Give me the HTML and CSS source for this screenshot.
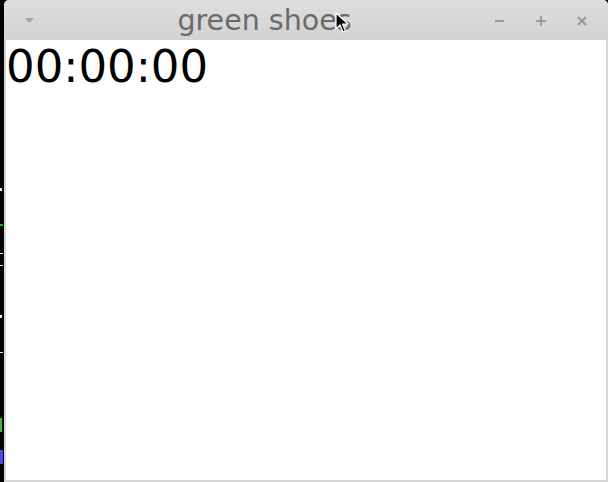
FILE: index.html
```html
<!DOCTYPE html>
<html>
<head>
<meta charset="utf-8">
<link rel="stylesheet" href="styles.css">
</head>
<body>
<div class="desktop">
  <div class="strip">
    <span class="mark m1"></span>
    <span class="mark m2"></span>
    <span class="mark m3"></span>
    <span class="mark m4"></span>
    <span class="mark m5"></span>
    <span class="mark m6"></span>
    <span class="mark m7"></span>
    <span class="mark m8"></span>
  </div>
  <div class="window">
    <div class="titlebar">
      <div class="menu-btn">
        <svg width="9" height="6" viewBox="0 0 9 6"><path d="M0 0 H9 L4.5 5 Z" fill="#a6a6a6"/></svg>
      </div>
      <div class="title">green shoes</div>
      <div class="controls">
        <svg class="ctl" width="12" height="12" viewBox="0 0 12 12"><rect x="1" y="5" width="9" height="2" fill="#9a9a9a"/></svg>
        <svg class="ctl" width="12" height="12" viewBox="0 0 12 12"><rect x="1" y="5" width="10" height="2" fill="#9a9a9a"/><rect x="5" y="1" width="2" height="10" fill="#9a9a9a"/></svg>
        <svg class="ctl" width="12" height="12" viewBox="0 0 12 12"><path d="M2 2 L10 10 M10 2 L2 10" stroke="#9a9a9a" stroke-width="2.2"/></svg>
      </div>
    </div>
    <div class="content">
      <div class="clock">00:00:00</div>
    </div>
  </div>
  <svg class="cursor" width="14" height="22" viewBox="0 0 14 22">
    <path d="M1 1 L1 17 L5 13 L8 20 L10.5 19 L7.5 12 L13 12 Z" fill="#000" stroke="#fff" stroke-width="1.2" stroke-linejoin="round"/>
  </svg>
</div>
</body>
</html>
```

FILE: styles.css
```css
html, body {
  margin: 0;
  padding: 0;
  background: #000;
}
.desktop {
  position: relative;
  width: 608px;
  height: 482px;
  display: flex;
  overflow: hidden;
  background: #000;
}
.strip {
  position: relative;
  width: 4px;
  flex: none;
  background: #000;
}
.mark {
  position: absolute;
  left: 0;
  width: 3px;
  height: 2px;
  background: #e8e8e8;
}
.m1 { top: 188px; height: 3px; width: 2px; }
.m2 { top: 224px; background: #1fae1f; height: 2px; }
.m3 { top: 253px; height: 1px; }
.m4 { top: 265px; height: 1px; }
.m5 { top: 315px; height: 3px; width: 2px; }
.m6 { top: 352px; height: 1px; }
.m7 { top: 418px; background: #35c035; height: 14px; width: 2px; }
.m8 { top: 450px; background: #4a4af0; height: 14px; width: 3px; }
.window {
  flex: 1;
  display: flex;
  flex-direction: column;
  border-radius: 5px 5px 0 0;
  overflow: hidden;
  background: #d6d6d6;
}
.titlebar {
  height: 40px;
  flex: none;
  display: flex;
  align-items: center;
  background: linear-gradient(#dedede, #d2d2d2);
}
.menu-btn {
  width: 50px;
  display: flex;
  justify-content: center;
  padding-top: 1px;
}
.title {
  flex: 1;
  text-align: center;
  font-family: "DejaVu Sans", sans-serif;
  font-size: 28.5px;
  color: #6a6a6a;
  padding-right: 19px;
}
.controls {
  display: flex;
  gap: 29px;
  padding-right: 20px;
  padding-top: 1px;
}
.content {
  flex: 1;
  margin: 0 2px 2px 2px;
  background: #fff;
}
.clock {
  font-family: "DejaVu Sans", sans-serif;
  font-size: 45px;
  line-height: 54px;
  color: #000;
  padding-left: 0;
}
.cursor {
  position: absolute;
  left: 335px;
  top: 12px;
}
```
